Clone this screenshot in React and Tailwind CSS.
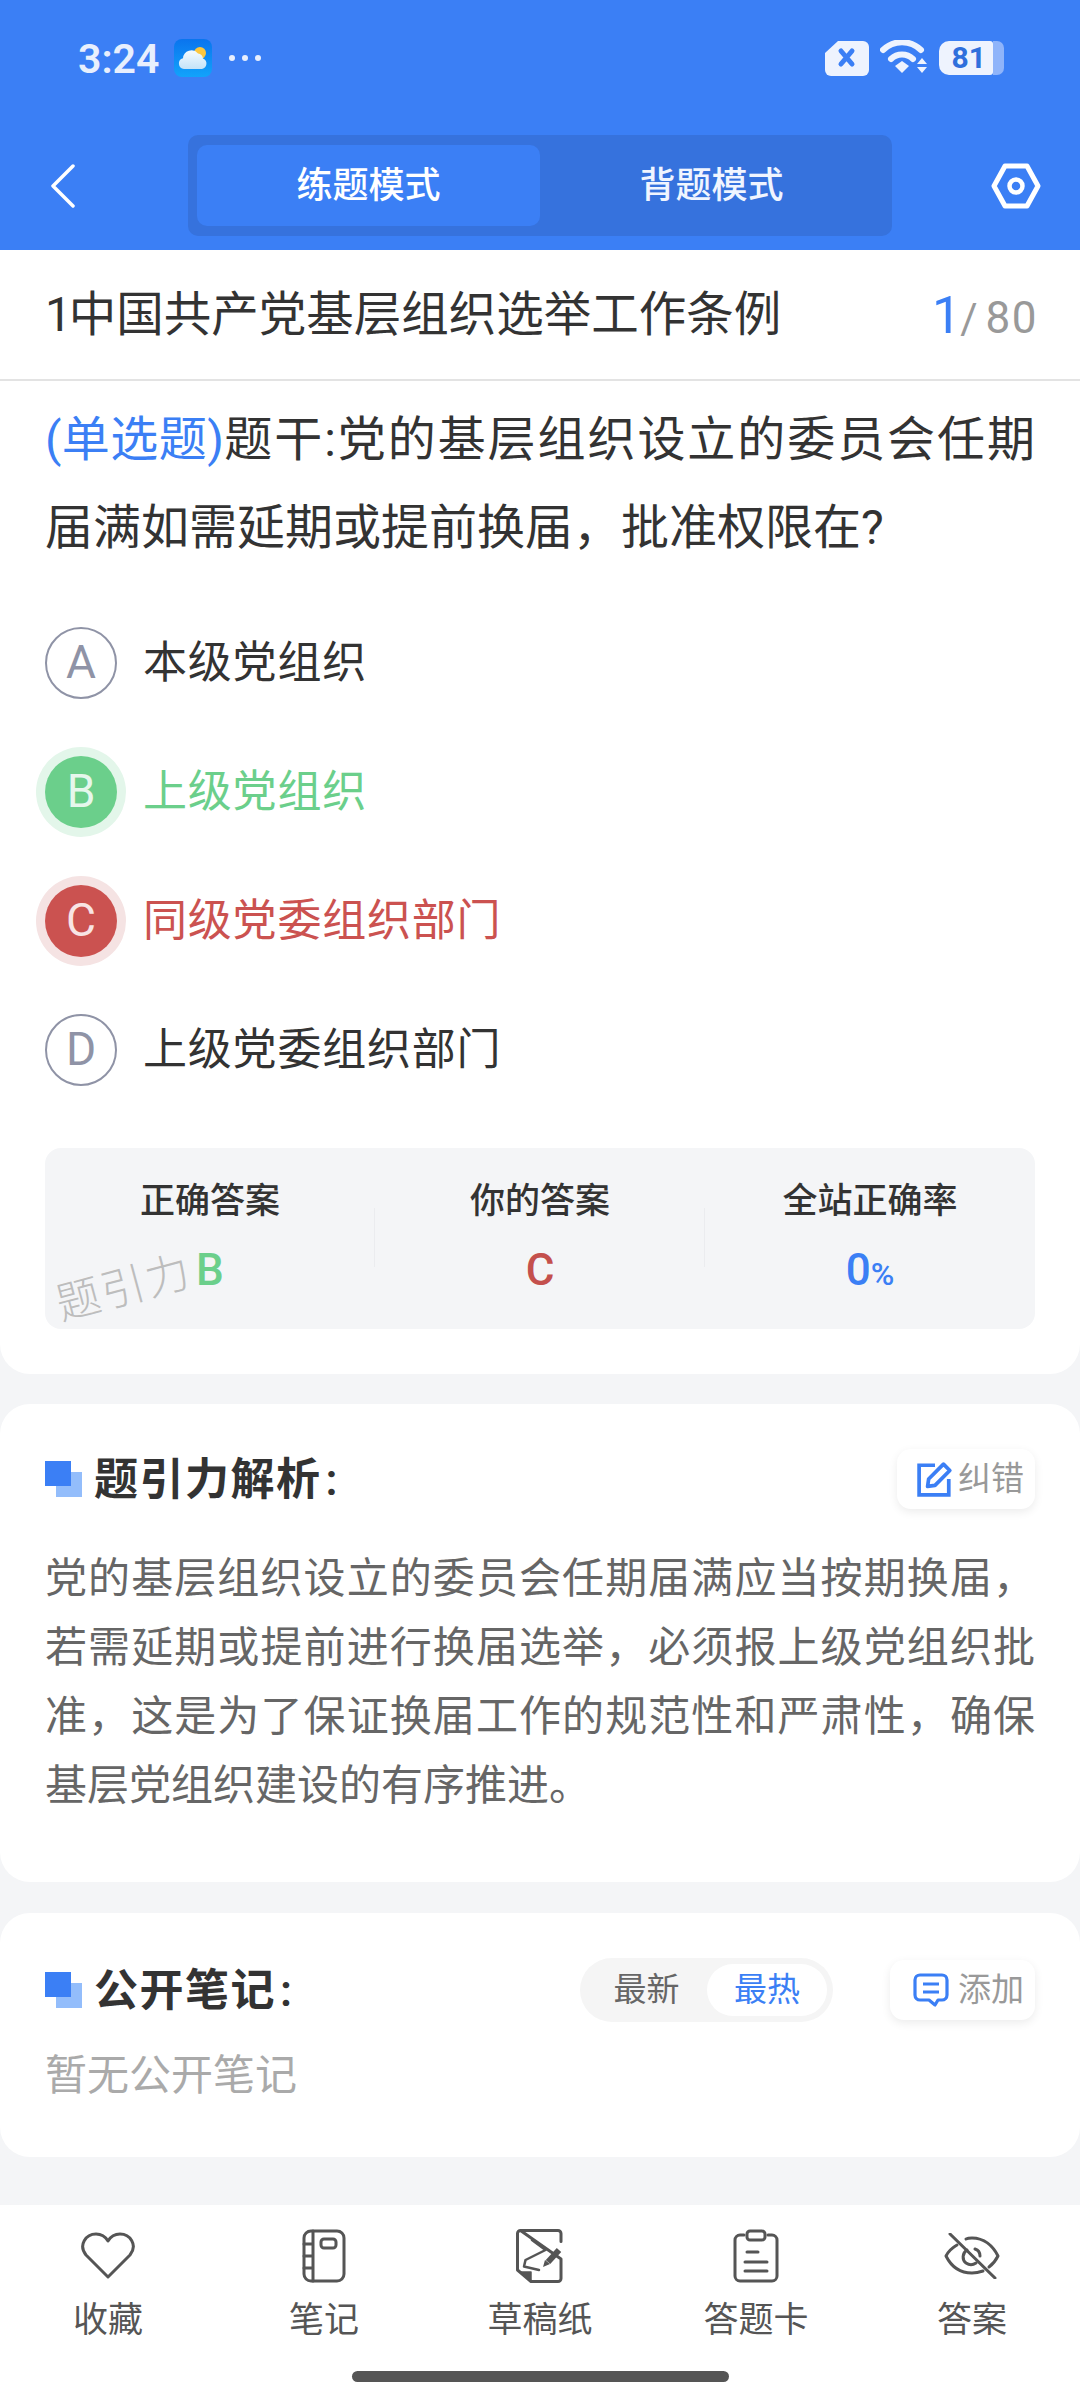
const font = "font-['Roboto','Noto_Sans_CJK_SC',sans-serif]";

const question = "\u9898\u5e72:\u515a\u7684\u57fa\u5c42\u7ec4\u7ec7\u8bbe\u7acb\u7684\u59d4\u5458\u4f1a\u4efb\u671f\u5c4a\u6ee1\u5982\u9700\u5ef6\u671f\u6216\u63d0\u524d\u6362\u5c4a\uff0c\u6279\u51c6\u6743\u9650\u5728?";
const analysis = "\u515a\u7684\u57fa\u5c42\u7ec4\u7ec7\u8bbe\u7acb\u7684\u59d4\u5458\u4f1a\u4efb\u671f\u5c4a\u6ee1\u5e94\u5f53\u6309\u671f\u6362\u5c4a\uff0c\u82e5\u9700\u5ef6\u671f\u6216\u63d0\u524d\u8fdb\u884c\u6362\u5c4a\u9009\u4e3e\uff0c\u5fc5\u987b\u62a5\u4e0a\u7ea7\u515a\u7ec4\u7ec7\u6279\u51c6\uff0c\u8fd9\u662f\u4e3a\u4e86\u4fdd\u8bc1\u6362\u5c4a\u5de5\u4f5c\u7684\u89c4\u8303\u6027\u548c\u4e25\u8083\u6027\uff0c\u786e\u4fdd\u57fa\u5c42\u515a\u7ec4\u7ec7\u5efa\u8bbe\u7684\u6709\u5e8f\u63a8\u8fdb\u3002";

function Marker() {
  return (
    <div className="relative w-[37px] h-[36px] shrink-0">
      <div className="absolute left-[11px] top-[11px] w-[26px] h-[25px] bg-[#93bdfb]"></div>
      <div className="absolute left-0 top-0 w-[26px] h-[25px] bg-[#3b7ff5]"></div>
    </div>
  );
}

function Option({ letter, text, state }) {
  const circle =
    state === "right"
      ? "bg-[#6bcf8b] text-[#e6f7ec] ring-[9px] ring-[#e3f6ea]"
      : state === "wrong"
      ? "bg-[#cb5250] text-[#f8e4e4] ring-[9px] ring-[#f5e3e3]"
      : "border-2 border-[#8f93a6] text-[#8f93a6]";
  const label =
    state === "right" ? "text-[#6bcf8b]" : state === "wrong" ? "text-[#cb5250]" : "text-[#333333]";
  return (
    <div className="h-[129px] flex items-center">
      <div className={`w-[72px] h-[72px] rounded-full flex items-center justify-center text-[46px] ${circle}`}>
        {letter}
      </div>
      <div className={`ml-[26px] text-[44px] tracking-[0.8px] ${label}`}>{text}</div>
    </div>
  );
}

function Stat({ label, children, divider }) {
  return (
    <div className="relative flex flex-col items-center pt-[33px]">
      <div className="text-[35px] leading-[42px] font-medium text-[#333333]">{label}</div>
      <div className="mt-[22px] h-[50px] leading-[50px] text-[44px] font-medium">{children}</div>
      {divider && <div className="absolute right-0 top-[60px] w-px h-[59px] bg-[#ebecef]"></div>}
    </div>
  );
}

function NavItem({ label, children }) {
  return (
    <div className="flex flex-col items-center">
      <div className="w-[56px] h-[56px] flex items-center justify-center">{children}</div>
      <div className="mt-[17px] text-[35px] leading-[40px] text-[#555555]">{label}</div>
    </div>
  );
}

const stroke = { fill: "none", stroke: "#555555", strokeWidth: 3, strokeLinecap: "round", strokeLinejoin: "round" };

export default function App() {
  return (
    <div className={`w-[1080px] h-[2400px] bg-[#f4f5f7] flex flex-col overflow-hidden ${font}`}>
      {/* header */}
      <div className="h-[250px] bg-[#3b7ff5] pt-[36px] shrink-0">
        <div className="h-[44px] pl-[78px] pr-[76px] flex items-center">
          <span className="text-[41px] font-semibold text-[#e8effd] leading-none translate-y-[1px]">3:24</span>
          <svg className="ml-[15px]" width="38" height="38" viewBox="0 0 38 38">
            <defs>
              <linearGradient id="wx" x1="0" y1="0" x2="0" y2="1">
                <stop offset="0" stopColor="#0a74ee" />
                <stop offset="1" stopColor="#12a3fb" />
              </linearGradient>
              <linearGradient id="cl" x1="0" y1="0" x2="0" y2="1">
                <stop offset="0" stopColor="#f4fbff" />
                <stop offset="1" stopColor="#c4e3f8" />
              </linearGradient>
            </defs>
            <rect width="38" height="38" rx="8" fill="url(#wx)" />
            <circle cx="26" cy="14" r="6" fill="#fcc73f" />
            <path d="M10 30a5.500 5.500 0 0 1-1-10.800A8.500 8.500 0 0 1 24 14.500a6 6 0 0 1 5 5 5.500 5.500 0 0 1-1 10.500z" fill="url(#cl)" />
          </svg>
          <div className="ml-[17px] flex gap-[7px]">
            <span className="w-[6px] h-[6px] rounded-full bg-[#e8effd]"></span>
            <span className="w-[6px] h-[6px] rounded-full bg-[#e8effd]"></span>
            <span className="w-[6px] h-[6px] rounded-full bg-[#e8effd]"></span>
          </div>
          <svg className="ml-auto" width="44" height="36" viewBox="0 0 44 36">
            <path d="M13 1h25a6 6 0 0 1 6 6v23a6 6 0 0 1-6 6H6a6 6 0 0 1-6-6V13z" fill="#eef3fe" />
            <path d="M16 11l11 13M27 11L16 24" stroke="#3b7ff5" strokeWidth="5" strokeLinecap="round" />
          </svg>
          <svg className="ml-[11px]" width="48" height="36" viewBox="0 0 48 36">
            <path d="M3 10a27 27 0 0 1 38 0" fill="none" stroke="#eef3fe" strokeWidth="6" strokeLinecap="round" />
            <path d="M11 19a16 16 0 0 1 22 0" fill="none" stroke="#eef3fe" strokeWidth="6" strokeLinecap="round" />
            <path d="M15 26l7-5 7 5-7 7z" fill="#eef3fe" />
            <path d="M37 24l5-6 5 6zM37 27h10l-5 6z" fill="#eef3fe" />
          </svg>
          <div className="ml-[11px] flex items-center">
            <div className="w-[54px] h-[34px] rounded-l-[10px] rounded-r-[3px] bg-[#eef3fe] flex items-center justify-end pr-[7px] text-[30px] font-bold text-[#2f6fdc] leading-none">
              81
            </div>
            <div className="w-[11px] h-[34px] rounded-r-[7px] bg-[#8fb4fa]"></div>
          </div>
        </div>

        <div className="mt-[55px] h-[101px] flex items-center">
          <svg className="ml-[50px]" width="26" height="44" viewBox="0 0 26 44">
            <path d="M23 2L3 22l20 20" fill="none" stroke="#ffffff" strokeWidth="3.500" strokeLinecap="round" strokeLinejoin="round" />
          </svg>
          <div className="ml-[112px] w-[704px] h-[101px] rounded-[10px] bg-[#3672dd] py-[10px] pl-[9px] pr-[9px] flex">
            <div className="w-[343px] h-full rounded-[10px] bg-[#3b7ff5] flex items-center justify-center text-[36px] font-medium text-white">
              练题模式
            </div>
            <div className="flex-1 flex items-center justify-center text-[36px] font-medium text-[#f0f5ff]">
              背题模式
            </div>
          </div>
          <svg className="ml-[99px]" width="50" height="46" viewBox="0 0 50 46">
            <path d="M14 3h22l11 20-11 20H14L3 23z" fill="none" stroke="#ffffff" strokeWidth="5" strokeLinejoin="round" />
            <circle cx="25" cy="23" r="6.500" fill="none" stroke="#ffffff" strokeWidth="4.500" />
          </svg>
        </div>
      </div>

      {/* question card */}
      <div className="h-[1124px] shrink-0 bg-white rounded-b-[30px] flex flex-col">
        <div className="h-[131px] pl-[45px] pr-[42px] pt-[2px] border-b-2 border-[#e3e3e3] flex items-center justify-between shrink-0">
          <div className="text-[47.500px] text-[#333333]">
            <span className="tracking-[-3px]">1</span>中国共产党基层组织选举工作条例
          </div>
          <div className="flex items-baseline">
            <span className="text-[52px] text-[#3b7ff5]">1</span>
            <span className="text-[42px] text-[#999999] -ml-[1px]">/</span>
            <span className="text-[44px] text-[#999999] ml-[8px] tracking-[1.500px]">80</span>
          </div>
        </div>
        <div className="px-[45px] pt-[15px]">
          <div className="text-[48px] leading-[88px] text-justify text-[#333333]">
            <span className="text-[#3b7ff5] tracking-[-1.500px]">(单选题)</span>
            {question}
          </div>
          <div className="mt-[26px]">
            <Option letter="A" text="本级党组织" />
            <Option letter="B" text="上级党组织" state="right" />
            <Option letter="C" text="同级党委组织部门" state="wrong" />
            <Option letter="D" text="上级党委组织部门" />
          </div>
          <div className="relative mt-[34px] h-[181px] rounded-[16px] bg-[#f4f5f7] grid grid-cols-3">
            <Stat label="正确答案" divider>
              <span className="text-[#6bcf8b]">B</span>
            </Stat>
            <Stat label="你的答案" divider>
              <span className="text-[#c4504d]">C</span>
            </Stat>
            <Stat label="全站正确率">
              <span className="text-[#3b7ff5]">
                0<span className="text-[32px]">%</span>
              </span>
            </Stat>
            <div className="absolute left-[10px] top-[118px] text-[44px] leading-none text-[#bdbdbd] font-light tracking-[2px] -rotate-[15deg]">
              题引力
            </div>
          </div>
        </div>
      </div>

      {/* analysis card */}
      <div className="mt-[30px] h-[478px] shrink-0 bg-white rounded-[30px] px-[45px] pt-[45px]">
        <div className="flex items-center h-[60px] justify-between">
          <div className="flex items-center">
            <Marker />
            <div className="ml-[12px] text-[44px] font-semibold text-[#333333] tracking-[1.500px] translate-y-[1px]">
              题引力解析<span className="ml-[4px]">:</span>
            </div>
          </div>
          <div className="w-[138px] h-[60px] rounded-[14px] bg-white shadow-[0_3px_10px_rgba(0,0,0,0.08)] flex items-center pl-[20px] gap-[5px]">
            <svg width="36" height="36" viewBox="0 0 34 34">
              <path d="M17 4H2v28h28V17" fill="none" stroke="#3b7ff5" strokeWidth="3.500" />
              <path d="M10 24l1-7L25 3l6 6-14 14z" fill="none" stroke="#3b7ff5" strokeWidth="3.500" strokeLinejoin="round" />
            </svg>
            <span className="text-[33px] text-[#999999]">纠错</span>
          </div>
        </div>
        <div className="mt-[35px] text-[42px] leading-[69px] text-justify text-[#666666]">{analysis}</div>
      </div>

      {/* notes card */}
      <div className="mt-[31px] h-[244px] shrink-0 bg-white rounded-[30px] px-[45px] pt-[45px]">
        <div className="flex items-center h-[64px]">
          <Marker />
          <div className="ml-[12px] text-[44px] font-semibold text-[#333333] tracking-[1.500px] translate-y-[1px]">
            公开笔记<span className="ml-[4px]">:</span>
          </div>
          <div className="ml-auto w-[253px] h-[64px] rounded-full bg-[#f5f5f5] flex items-center p-[6px]">
            <div className="w-[121px] text-center text-[33px] text-[#666666]">最新</div>
            <div className="w-[120px] h-[52px] rounded-full bg-white flex items-center justify-center text-[33px] text-[#3b7ff5]">
              最热
            </div>
          </div>
          <div className="ml-[57px] w-[145px] h-[60px] rounded-[14px] bg-white shadow-[0_3px_10px_rgba(0,0,0,0.08)] flex items-center pl-[23px] gap-[9px]">
            <svg width="36" height="34" viewBox="0 0 36 34">
              <path d="M7 2h22a5 5 0 0 1 5 5v15a5 5 0 0 1-5 5h-4l-3 5-6-5H7a5 5 0 0 1-5-5V7a5 5 0 0 1 5-5z" fill="none" stroke="#3b7ff5" strokeWidth="3.200" strokeLinejoin="round" />
              <path d="M10 11h16M10 19h16" stroke="#3b7ff5" strokeWidth="3.200" />
            </svg>
            <span className="text-[33px] text-[#999999]">添加</span>
          </div>
        </div>
        <div className="mt-[24px] text-[42px] leading-[60px] text-[#aaaaaa]">暂无公开笔记</div>
      </div>

      {/* bottom nav */}
      <div className="mt-auto h-[195px] bg-white shrink-0 flex flex-col">
        <div className="grid grid-cols-5 pt-[23px]">
          <NavItem label="收藏">
            <svg width="56" height="50" viewBox="0 0 56 50">
              <path d="M28 46L6 24C-2 14 6 3 16 3c5 0 9 2 12 7 3-5 7-7 12-7 10 0 18 11 10 21z" {...stroke} />
            </svg>
          </NavItem>
          <NavItem label="笔记">
            <svg width="44" height="54" viewBox="0 0 44 54">
              <rect x="2" y="2" width="40" height="50" rx="7" {...stroke} />
              <path d="M11 2v50M2 15h9M2 27h9M2 39h9" {...stroke} />
              <rect x="19" y="10" width="15" height="9" rx="3" {...stroke} />
            </svg>
          </NavItem>
          <NavItem label="草稿纸">
            <svg width="48" height="54" viewBox="0 0 48 54">
              <path d="M5 1.500h37a3 3 0 0 1 3 3v8M45 30v19.500a3 3 0 0 1-3 3H15L1.500 41V4.500a3 3 0 0 1 3-3z" {...stroke} />
              <path d="M5 43h10v9z" fill="#555555" stroke="#555555" strokeWidth="1.500" strokeLinejoin="round" />
              <path d="M16 11l13.500 10-20 10-1.500 6.500 15 3.500" {...stroke} strokeWidth="2.500" />
              <path d="M32 33l11-12" fill="none" stroke="#555555" strokeWidth="6" />
              <path d="M27 38l2-7 5 4z" fill="#555555" />
            </svg>
          </NavItem>
          <NavItem label="答题卡">
            <svg width="46" height="54" viewBox="0 0 46 54">
              <path d="M11 6H7a5 5 0 0 0-5 5v36a5 5 0 0 0 5 5h32a5 5 0 0 0 5-5V11a5 5 0 0 0-5-5h-4" {...stroke} />
              <rect x="14" y="2" width="18" height="9" rx="3" {...stroke} />
              <path d="M14 23h11M12 33h22M12 42h22" {...stroke} />
            </svg>
          </NavItem>
          <NavItem label="答案">
            <svg width="56" height="46" viewBox="0 0 56 46">
              <path d="M13 12C6 16 3 21 2 23c5 10 14 17 26 17 4 0 8-1 11-2M22 6c2-1 4-1 6-1 12 0 21 8 26 18-2 4-5 8-9 11" {...stroke} />
              <path d="M6 1l45 44" {...stroke} />
              <path d="M23 17c-5 3-5 10-1 13 3 2 7 2 10 0M31 16c3 1 5 4 5 7" {...stroke} />
            </svg>
          </NavItem>
        </div>
        <div className="mt-auto mb-[18px] mx-auto w-[377px] h-[11px] rounded-full bg-[#555555]"></div>
      </div>
    </div>
  );
}
